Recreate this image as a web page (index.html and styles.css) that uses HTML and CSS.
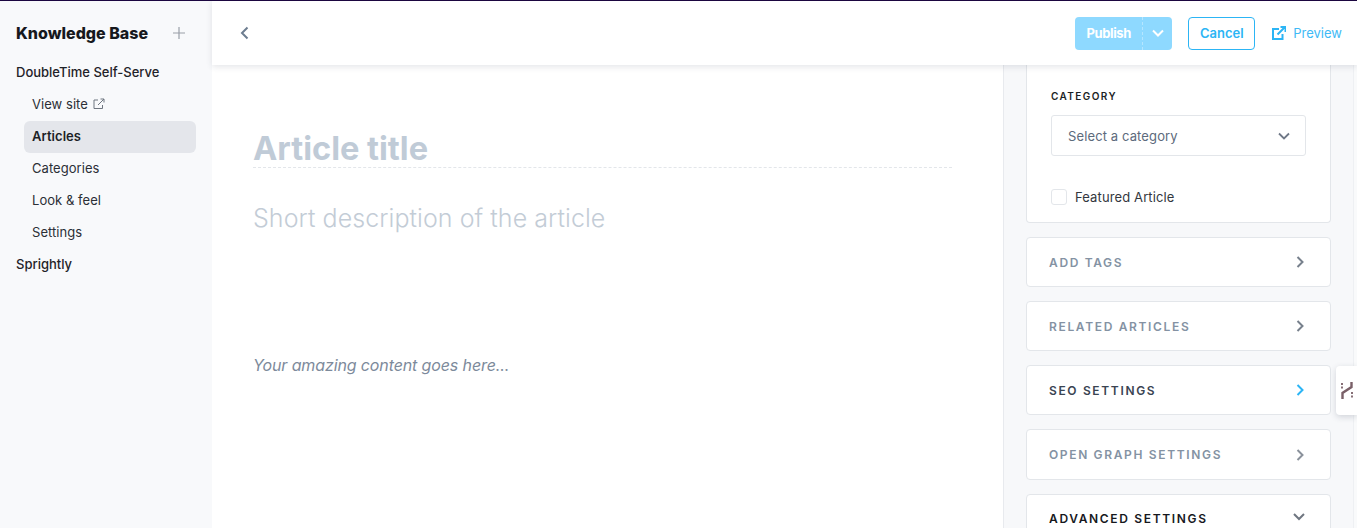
FILE: index.html
```html
<!DOCTYPE html>
<html lang="en">
<head>
    <meta charset="UTF-8">
    <title>Knowledge Base - New Article</title>
    <link rel="stylesheet" href="styles.css">
</head>
<body>
    <div class="app">
        <aside class="sidebar">
            <div class="sidebar-head">
                <h1>Knowledge Base</h1>
                <svg class="plus" width="12" height="12" viewBox="0 0 12 12"><path d="M6 0v12M0 6h12" stroke="#9a9fa8" stroke-width="1.2" fill="none"/></svg>
            </div>
            <div class="site-name">DoubleTime Self-Serve</div>
            <nav class="site-nav">
                <a class="nav-item">View site
                    <svg width="12" height="12" viewBox="0 0 12 12" fill="none" stroke="#6f7680" stroke-width="1"><path d="M9.5 7v3.5h-8.5v-8.5h4M5 7l6-6M7.5 1H11v3.5"/></svg>
                </a>
                <a class="nav-item active">Articles</a>
                <a class="nav-item">Categories</a>
                <a class="nav-item">Look &amp; feel</a>
                <a class="nav-item">Settings</a>
            </nav>
            <div class="site-name">Sprightly</div>
        </aside>

        <div class="workspace">
            <header class="topbar">
                <svg class="back" width="9" height="14" viewBox="0 0 9 14" fill="none" stroke="#6d7d90" stroke-width="2"><path d="M7.5 1.5 2 7l5.5 5.5"/></svg>
                <div class="actions">
                    <div class="publish">
                        <span class="publish-label">Publish</span>
                        <span class="publish-arrow">
                            <svg width="12" height="8" viewBox="0 0 12 8" fill="none" stroke="#fff" stroke-width="2"><path d="M1 1.5l5 5 5-5"/></svg>
                        </span>
                    </div>
                    <button class="cancel">Cancel</button>
                    <a class="preview">
                        <svg width="14" height="14" viewBox="0 0 14 14" fill="none" stroke="#2cb5f5" stroke-width="2"><path d="M10.500 8v5H1V3h6M5.500 8.500 13 1M8.500 1H13.500V6"/></svg>
                        Preview
                    </a>
                </div>
            </header>

            <div class="content">
                <main class="editor">
                    <div class="title-field">Article title</div>
                    <div class="description">Short description of the article</div>
                    <div class="body-text">Your amazing content goes here...</div>
                </main>

                <section class="panel">
                    <div class="card category-card">
                        <label class="field-label">CATEGORY</label>
                        <div class="select">
                            <span>Select a category</span>
                            <svg width="12" height="8" viewBox="0 0 12 8" fill="none" stroke="#6f7887" stroke-width="1.800"><path d="M1 1.500l5 5 5-5"/></svg>
                        </div>
                        <div class="check-row">
                            <span class="checkbox"></span>
                            <span>Featured Article</span>
                        </div>
                    </div>
                    <div class="card row muted">
                        <span>ADD TAGS</span>
                        <svg width="8" height="12" viewBox="0 0 8 12" fill="none" stroke="#77808c" stroke-width="2"><path d="M1.500 1l5 5-5 5"/></svg>
                    </div>
                    <div class="card row muted">
                        <span>RELATED ARTICLES</span>
                        <svg width="8" height="12" viewBox="0 0 8 12" fill="none" stroke="#77808c" stroke-width="2"><path d="M1.500 1l5 5-5 5"/></svg>
                    </div>
                    <div class="card row hover">
                        <span>SEO SETTINGS</span>
                        <svg width="8" height="12" viewBox="0 0 8 12" fill="none" stroke="#2cb5f5" stroke-width="2"><path d="M1.500 1l5 5-5 5"/></svg>
                    </div>
                    <div class="card row muted tall">
                        <span>OPEN GRAPH SETTINGS</span>
                        <svg width="8" height="12" viewBox="0 0 8 12" fill="none" stroke="#8a919b" stroke-width="2"><path d="M1.500 1l5 5-5 5"/></svg>
                    </div>
                    <div class="card row open">
                        <span>ADVANCED SETTINGS</span>
                        <svg width="12" height="8" viewBox="0 0 12 8" fill="none" stroke="#6f7680" stroke-width="2"><path d="M1 1l5 5 5-5"/></svg>
                    </div>
                </section>
            </div>
        </div>
    </div>

    <div class="side-tab">
        <svg width="12" height="17" viewBox="0 0 12 17" fill="none" stroke="#7a6068" stroke-width="2.400"><path d="M1.500 17v-6l9-6V0"/><path d="M1 1v6M11 10v7" stroke-width="1.800" stroke-dasharray="2 1.500"/></svg>
    </div>
</body>
</html>
```

FILE: styles.css
```css
* {
    box-sizing: border-box;
}
html, body {
    margin: 0;
    height: 100%;
    overflow: hidden;
}
body {
    font-family: Inter, "Liberation Sans", sans-serif;
    font-size: 13px;
    color: #1c1f26;
    background: #fff;
    border-top: 1px solid #1b0640;
}
.app {
    display: flex;
    height: 100%;
}

/* left nav */
.sidebar {
    width: 212px;
    flex-shrink: 0;
    padding: 22px 16px 0;
    background: #f8f9fb;
}
.sidebar-head {
    display: flex;
    align-items: center;
    justify-content: space-between;
    padding-right: 11px;
    height: 20px;
    margin-bottom: 13px;
}
.sidebar-head h1 {
    margin: 0;
    font-size: 16px;
    font-weight: 800;
    color: #16181d;
}
.site-name {
    height: 32px;
    line-height: 32px;
    font-weight: 500;
    font-size: 13px;
    color: #1f2228;
}
.site-nav {
    margin: 1px 0 -1px 8px;
    width: 172px;
}
.site-nav .nav-item {
    display: flex;
    align-items: center;
    gap: 5px;
    height: 32px;
    padding: 0 0 2px 8px;
    border-radius: 6px;
    letter-spacing: 0.05px;
    color: #2b2f36;
}
.nav-item.active {
    background: #e4e6eb;
    font-weight: 600;
    color: #1c1f26;
}

/* top bar */
.workspace {
    flex: 1;
    min-width: 0;
    display: flex;
    flex-direction: column;
}
.topbar {
    height: 64px;
    flex-shrink: 0;
    display: flex;
    align-items: center;
    justify-content: space-between;
    padding: 0 15px 0 28px;
    background: #fff;
    box-shadow: 0 2px 6px rgba(40, 50, 70, 0.12);
    position: relative;
    z-index: 2;
}
.actions {
    display: flex;
    align-items: center;
}
.publish {
    display: flex;
    height: 33px;
    width: 97px;
    border-radius: 4px;
    background: #8ed9ff;
    color: #fff;
    font-weight: 700;
    letter-spacing: -0.4px;
}
.publish-label {
    width: 68px;
    line-height: 33px;
    text-align: center;
    border-right: 1px dashed #b5e6ff;
}
.publish-arrow {
    flex: 1;
    display: flex;
    align-items: center;
    justify-content: center;
}
.cancel {
    width: 67px;
    height: 33px;
    margin-left: 16px;
    padding: 0;
    border: 1px solid #2cb5f5;
    border-radius: 4px;
    background: #fff;
    color: #2cb5f5;
    font: 600 13px Inter, "Liberation Sans", sans-serif;
}
.preview {
    display: flex;
    align-items: center;
    gap: 7px;
    margin-left: 17px;
    color: #3fbaf6;
}

.content {
    flex: 1;
    min-height: 0;
    display: flex;
}

/* editor */
.editor {
    flex: 1;
    padding: 63px 51px 0 41px;
}
.title-field {
    height: 40px;
    font-size: 32.6px;
    font-weight: 700;
    line-height: 41px;
    color: #c0cbd7;
    border-bottom: 1px dashed #e3e6ea;
}
.description {
    margin-top: 36px;
    font-size: 25px;
    font-weight: 300;
    line-height: 29px;
    letter-spacing: 0.06px;
    color: #c3ccd6;
}
.body-text {
    margin-top: 122px;
    font-size: 16px;
    font-style: italic;
    line-height: 20px;
    letter-spacing: -0.12px;
    color: #7d8a9b;
}

/* right settings column */
.panel {
    width: 354px;
    flex-shrink: 0;
    padding: 0 26px 0 22px;
    background: #f7f8fa;
    border-left: 1px solid #e8eaee;
    box-shadow: inset -3px 0 0 #f9fafb, inset -4px 0 0 #eef0f3;
    display: flex;
    flex-direction: column;
    gap: 14px;
}
.card {
    flex-shrink: 0;
    background: #fff;
    border: 1px solid #e3e6ea;
    border-radius: 4px;
}
.category-card {
    height: 158px;
    border-top: none;
    border-radius: 0 0 4px 4px;
    padding: 25px 24px 0;
}
.field-label {
    display: block;
    font-size: 10px;
    font-weight: 600;
    line-height: 12px;
    letter-spacing: 1.4px;
    color: #1c1f26;
}
.select {
    display: flex;
    align-items: center;
    justify-content: space-between;
    height: 41px;
    margin-top: 13px;
    padding: 0 15px 0 16px;
    border: 1px solid #e3e6ea;
    border-radius: 3px;
    letter-spacing: 0.12px;
    color: #5c6a7c;
}
.check-row {
    display: flex;
    align-items: center;
    gap: 8px;
    margin-top: 33px;
    letter-spacing: 0.12px;
    color: #33373e;
}
.checkbox {
    width: 16px;
    height: 16px;
    border: 1px solid #e3e6ea;
    border-radius: 3px;
}
.row {
    display: flex;
    align-items: center;
    justify-content: space-between;
    height: 50px;
    padding: 0 26px 0 22px;
    font-size: 12px;
    font-weight: 600;
    letter-spacing: 1.65px;
}
.row.tall {
    height: 51px;
}
.row.muted {
    color: #8492a3;
}
.row.hover {
    color: #3a4452;
}
.row.open {
    height: 60px;
    padding: 0 25px 12px 22px;
    color: #16181d;
}
.row.open svg {
    margin-top: -2px;
}

.side-tab {
    position: absolute;
    top: 366px;
    right: 0;
    width: 21px;
    height: 49px;
    display: flex;
    align-items: center;
    padding-left: 5px;
    background: #fff;
    border-radius: 4px 0 0 4px;
    box-shadow: 0 2px 6px rgba(40, 50, 70, 0.18);
    z-index: 3;
}
```
